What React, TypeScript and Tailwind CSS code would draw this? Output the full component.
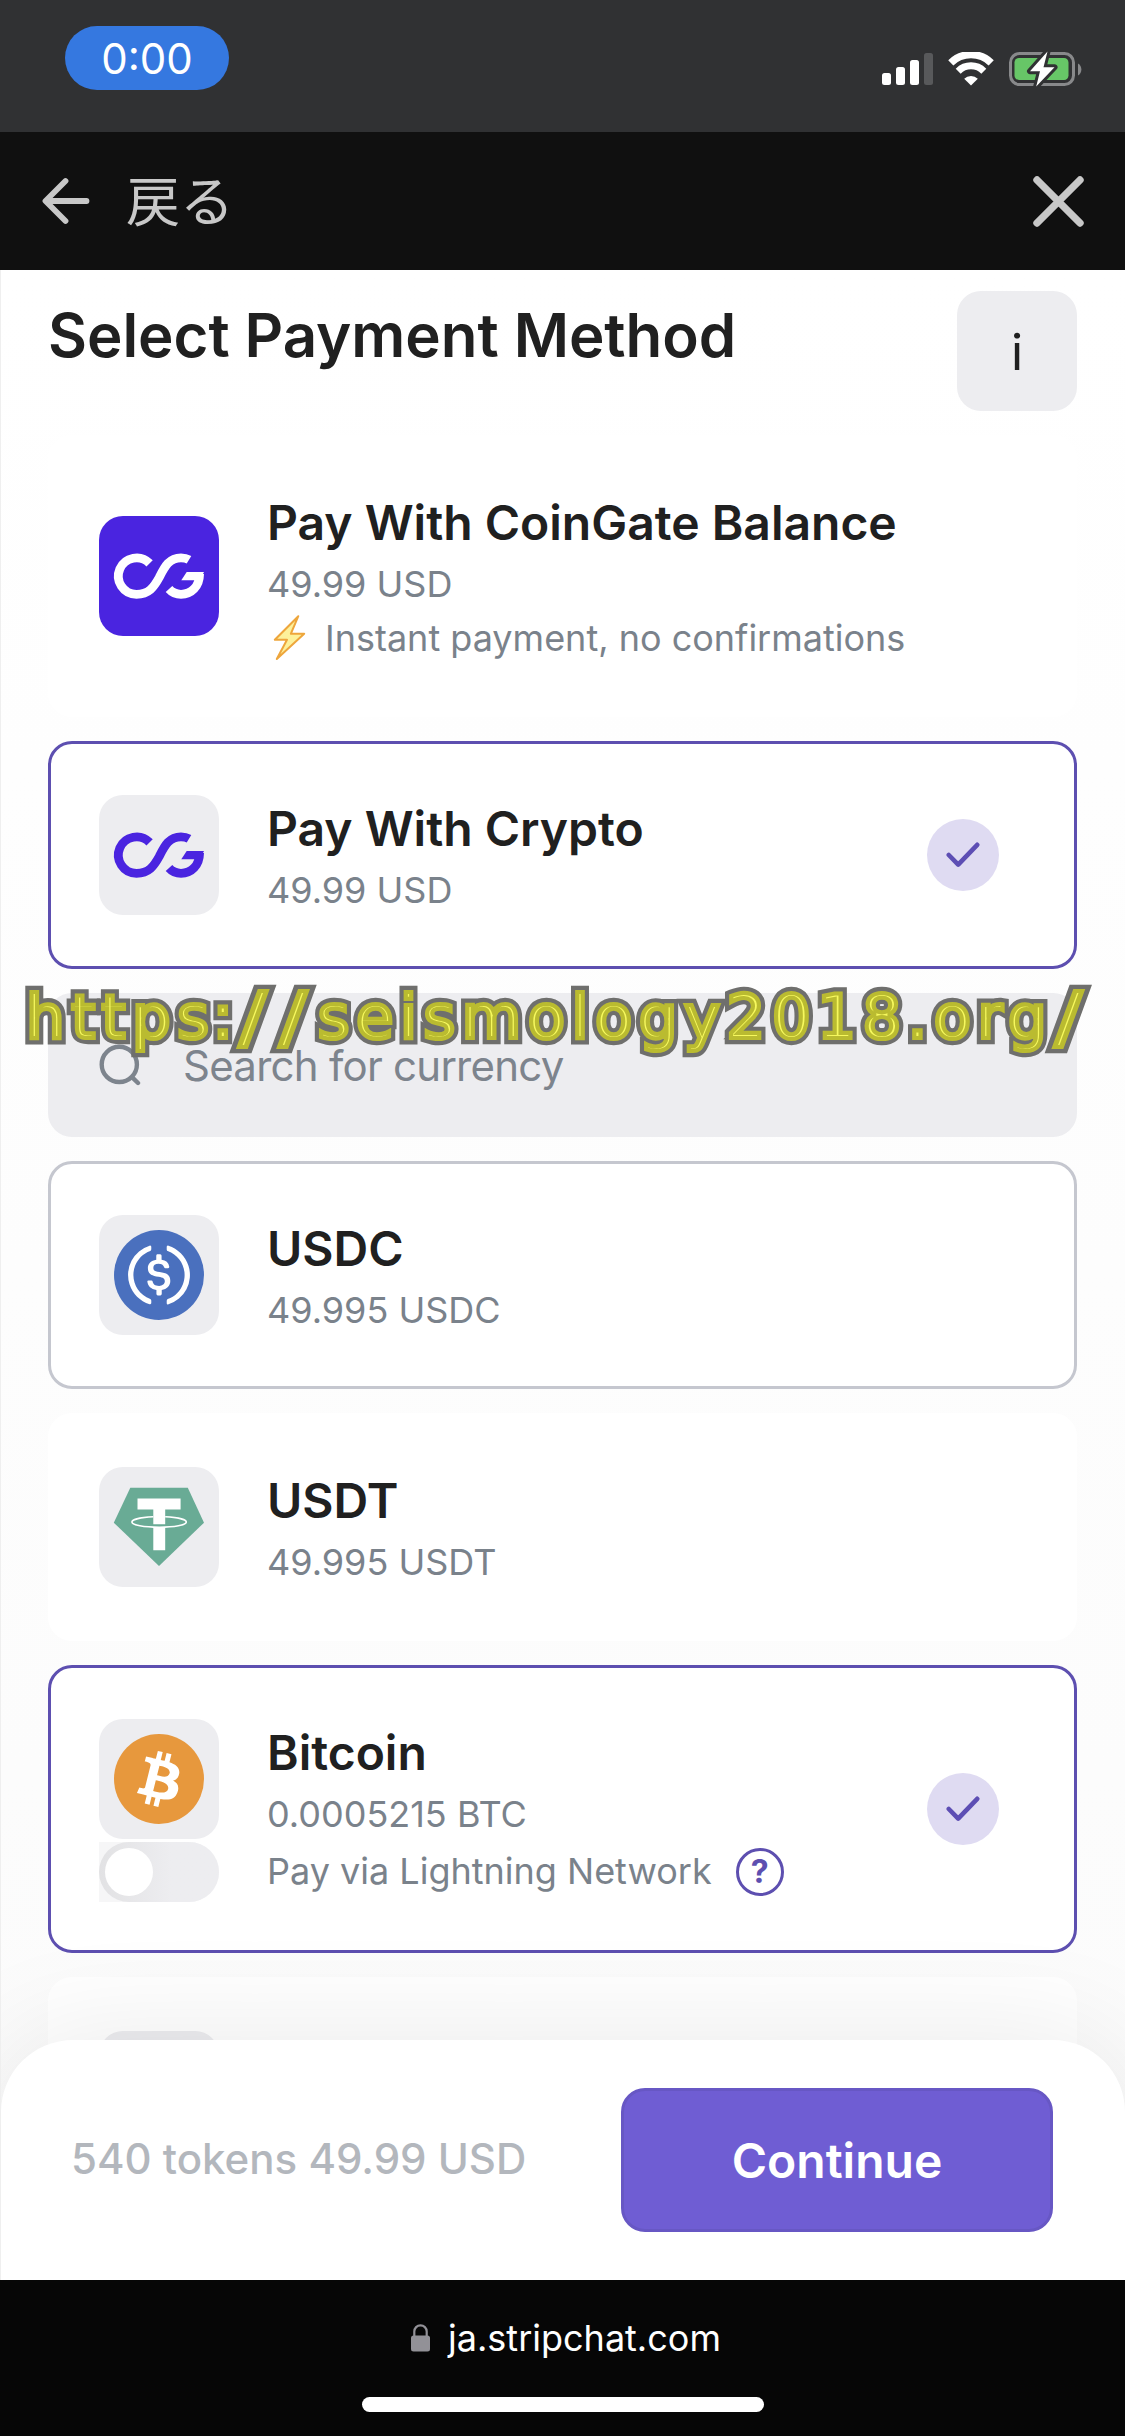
import React from 'react';
import clsx from 'clsx';

const SignalIcon = () => (
  <svg className="w-[51px] h-8" viewBox="0 0 51 32" fill="#fff">
    <rect x="0" y="20" width="9" height="12" rx="2.5" />
    <rect x="14" y="14" width="9" height="18" rx="2.5" />
    <rect x="28" y="7" width="9" height="25" rx="2.5" />
    <rect x="42" y="0" width="9" height="32" rx="2.5" fill="#58595b" />
  </svg>
);

const WifiIcon = () => (
  <svg className="w-[46px] h-[34px]" viewBox="0 0 46 34" fill="none" stroke="#fff">
    <path d="M2.8 10.8A29 29 0 0 1 43.2 10.8" strokeWidth="7.4" />
    <path d="M10.2 19.2A18 18 0 0 1 35.8 19.2" strokeWidth="7" />
    <path d="M23 33.6L16.2 26.8A9.4 9.4 0 0 1 29.8 26.8Z" fill="#fff" stroke="none" />
  </svg>
);

const BatteryIcon = () => (
  <svg className="w-[73px] h-[38px]" viewBox="0 0 73 38" fill="none">
    <rect x="1.5" y="3.5" width="63" height="31" rx="9" stroke="#88898b" strokeWidth="3" />
    <path d="M69 13.5a7 7 0 0 1 0 12z" fill="#88898b" />
    <rect x="5.5" y="8" width="54" height="22" rx="4.5" fill="#67c667" />
    <path
      d="M38.5 1.5L21 21.2H31L27.2 36.5L45.5 17.2H34.5Z"
      fill="#fff"
      stroke="#303133"
      strokeWidth="6"
      strokeLinejoin="round"
      paintOrder="stroke"
    />
  </svg>
);

const BackArrow = () => (
  <svg className="w-[48px] h-[50px]" viewBox="0 0 48 50" fill="none" stroke="#c8c8c8" strokeWidth="5.8" strokeLinecap="round" strokeLinejoin="round">
    <path d="M23.5 5L3.5 25L23.5 45M4 25H44.5" />
  </svg>
);

const CloseIcon = () => (
  <svg className="w-[51px] h-[51px]" viewBox="0 0 51 51" fill="none" stroke="#c8c8c8" strokeWidth="7.4" strokeLinecap="round">
    <path d="M4 4L47 47M47 4L4 47" />
  </svg>
);

const CoinGateLogo = ({ color }: { color: string }) => (
  <svg className="w-[120px] h-[120px]" viewBox="0 0 120 120" fill="none" stroke={color} strokeWidth="8.8">
    <path d="M50.6 47.4A18.2 18.2 0 1 0 37.5 78.3C50 78.3 55 71 60.2 61.5C66 50 70.5 41.8 82 41.8C85 41.8 87.7 42.4 90 43.8" />
    <path d="M70 73C73.2 76.6 77.5 78.3 82 78.3C92.5 78.3 100.4 70.5 100.6 58" />
    <path d="M105 56H87.7L82.3 64.2H101Z" fill={color} stroke="none" />
  </svg>
);

const UsdcLogo = () => (
  <svg className="w-[90px] h-[90px]" viewBox="0 0 32 32">
    <circle cx="16" cy="16" r="16" fill="#4a70be" />
    <g fill="#fff">
      <path d="M20.022 18.124c0-2.124-1.28-2.852-3.84-3.156-1.828-.243-2.193-.728-2.193-1.578 0-.85.61-1.396 1.828-1.396 1.097 0 1.707.364 2.011 1.275a.458.458 0 00.427.303h.975a.416.416 0 00.427-.425v-.06a3.04 3.04 0 00-2.743-2.489V9.142c0-.243-.183-.425-.487-.486h-.915c-.243 0-.426.182-.487.486v1.396c-1.829.242-2.986 1.456-2.986 2.974 0 2.002 1.218 2.791 3.778 3.095 1.707.303 2.255.668 2.255 1.639 0 .97-.853 1.638-2.011 1.638-1.585 0-2.133-.667-2.316-1.578-.06-.242-.244-.364-.427-.364h-1.036a.416.416 0 00-.426.425v.06c.243 1.518 1.219 2.61 3.23 2.914v1.457c0 .242.183.425.487.485h.915c.243 0 .426-.182.487-.485V21.34c1.829-.303 3.047-1.578 3.047-3.217z" />
      <path d="M12.892 24.497c-4.754-1.7-7.192-6.98-5.424-11.653.914-2.55 2.925-4.491 5.424-5.402.244-.121.365-.303.365-.607v-.85c0-.242-.121-.424-.365-.485-.061 0-.183 0-.244.06a10.895 10.895 0 00-7.13 13.717c1.096 3.4 3.717 6.01 7.13 7.102.244.121.488 0 .548-.243.061-.06.061-.122.061-.243v-.85c0-.182-.182-.424-.365-.546zm6.46-18.936c-.244-.122-.488 0-.548.242-.061.061-.061.122-.061.243v.85c0 .243.182.485.365.607 4.754 1.7 7.192 6.98 5.424 11.653-.914 2.55-2.925 4.491-5.424 5.402-.244.121-.365.303-.365.607v.85c0 .242.121.424.365.485.061 0 .183 0 .244-.06a10.895 10.895 0 007.13-13.717c-1.096-3.46-3.778-6.07-7.13-7.162z" />
    </g>
  </svg>
);

const TetherLogo = () => (
  <svg className="w-[120px] h-[120px]" viewBox="0 0 120 120">
    <path d="M31.3 20.7H88.8L105 55.7L60 99L14.8 55.7Z" fill="#69ab95" />
    <path d="M38.5 31.5H81.6V42.4H66.2V57.2H54.3V42.4H38.5ZM54.3 60.4H66.2V83.3H54.3Z" fill="#fff" />
    <path
      d="M54.3 49.8C41.8 50.3 32.9 52.4 32.9 55C32.9 58 45 60.2 60.2 60.2C75.4 60.2 87.3 58 87.3 55C87.3 52.4 78.6 50.3 66.2 49.8"
      fill="none"
      stroke="#fff"
      strokeWidth="1.6"
    />
  </svg>
);

const BitcoinLogo = () => (
  <svg className="w-[90px] h-[90px]" viewBox="0 0 32 32">
    <circle cx="16" cy="16" r="16" fill="#e7983d" />
    <path
      fill="#fff"
      d="M23.189 14.02c.314-2.096-1.283-3.223-3.465-3.975l.708-2.84-1.728-.43-.69 2.765c-.454-.114-.92-.22-1.385-.326l.695-2.783L15.596 6l-.708 2.839c-.376-.086-.746-.17-1.104-.26l.002-.009-2.384-.595-.46 1.846s1.283.294 1.256.312c.7.175.826.638.805 1.006l-.806 3.235c.048.012.11.03.18.057l-.183-.045-1.13 4.532c-.086.212-.303.531-.793.41.018.025-1.256-.313-1.256-.313l-.858 1.978 2.25.561c.418.105.828.215 1.231.318l-.715 2.872 1.727.43.708-2.84c.472.127.93.245 1.378.357l-.706 2.828 1.728.43.715-2.866c2.948.558 5.164.333 6.097-2.333.752-2.146-.037-3.385-1.588-4.192 1.13-.26 1.98-1.003 2.207-2.538zm-3.95 5.538c-.533 2.147-4.148.986-5.32.695l.95-3.805c1.172.293 4.929.872 4.37 3.11zm.535-5.569c-.487 1.953-3.495.96-4.47.717l.86-3.45c.975.243 4.118.696 3.61 2.733z"
    />
  </svg>
);

const BoltEmoji = () => (
  <svg className="w-[34px] h-[48px] ml-[5px] mr-[19px]" viewBox="0 0 34 48">
    <path d="M26.3 2.2L2.8 25.8H15L4.8 45L32.2 19.8H18.8Z" fill="#fdf19a" stroke="#eea63c" strokeWidth="2" strokeLinejoin="round" />
  </svg>
);

const SearchIcon = () => (
  <svg className="w-[42px] h-[42px]" viewBox="0 0 42 42" fill="none" stroke="#7d848d" strokeWidth="4.4" strokeLinecap="round">
    <circle cx="20.3" cy="20.4" r="17.6" />
    <path d="M33.5 33.6L39 39" />
  </svg>
);

const LockIcon = () => (
  <svg className="w-[19px] h-[28px]" viewBox="0 0 19 28">
    <rect x="0" y="11.5" width="19" height="16" rx="2.5" fill="#929197" />
    <path d="M3.3 12V7.5a6.2 6.2 0 0 1 12.4 0V12" fill="none" stroke="#929197" strokeWidth="2.2" />
  </svg>
);

const CheckBadge = () => (
  <div className="mr-[27px] flex h-[72px] w-[72px] items-center justify-center rounded-full bg-[#dfdbf2]">
    <svg className="w-[34px] h-[26px]" viewBox="0 0 34 26" fill="none" stroke="#5d4eb4" strokeWidth="4.6" strokeLinecap="round" strokeLinejoin="round">
      <path d="M2.8 13L12.2 22.6L31.2 2.8" />
    </svg>
  </div>
);

interface MethodCardProps {
  title: string;
  amount: string;
  icon: React.ReactNode;
  tone?: 'plain' | 'selected' | 'outlined';
  filledIcon?: boolean;
  note?: React.ReactNode;
  toggle?: boolean;
}

const MethodCard: React.FC<MethodCardProps> = ({ title, amount, icon, tone = 'plain', filledIcon, note, toggle }) => (
  <div
    className={clsx(
      'flex items-center rounded-3xl border-[3px] bg-white p-12',
      tone === 'plain' && 'border-white',
      tone === 'selected' && 'border-[#5d4fb0]',
      tone === 'outlined' && 'border-[#c5c7cf]'
    )}
  >
    <div className="mr-12 flex flex-col">
      <div
        className={clsx(
          'my-[3px] flex h-[120px] w-[120px] items-center justify-center rounded-3xl',
          filledIcon ? 'bg-[#4a24e0]' : 'bg-[#ededf0]'
        )}
      >
        {icon}
      </div>
      {toggle && (
        <div className="flex h-[60px] w-[120px] items-center rounded-r-full bg-[#f6f6f7]">
          <div className="flex h-[60px] w-[120px] items-center rounded-full bg-linear-to-r from-[#e2e2e4] to-[#ededf0] to-60% px-1.5">
            <div className="h-12 w-12 rounded-full bg-white" />
          </div>
        </div>
      )}
    </div>
    <div className="flex-1">
      <div className="h-[71px] text-[48px] leading-[74px] font-semibold text-[#202020]">{title}</div>
      <div className="h-[55px] text-[36px] leading-[54px] text-[#7a828b]">{amount}</div>
      {note}
    </div>
    {tone === 'selected' && <CheckBadge />}
  </div>
);

// every run of text carries its own dark outline underneath the yellow face
const OUTLINE =
  "before:absolute before:left-0 before:top-0 before:-z-10 before:content-[attr(data-text)] before:[-webkit-text-stroke:12.5px_#6f6f6d]";

const Slashes = ({ text }: { text: string }) => (
  <span
    data-text={text}
    className={clsx('relative mx-[5px] inline-block origin-center translate-y-[3px] scale-x-120 text-[67px] leading-none tracking-[11px] isolate', OUTLINE)}
  >
    {text}
  </span>
);

const Watermark = () => (
  <div className="absolute left-[26px] top-[981px] isolate flex h-[72px] items-baseline whitespace-nowrap font-['DejaVu_Sans',sans-serif] text-[61px] leading-[72px] tracking-[6.5px] text-[#f6f85e] [-webkit-text-stroke:4.2px_#babb30]">
    <span data-text="https" className={clsx('relative', OUTLINE)}>https</span>
    <span data-text=":" className={clsx('relative -ml-[3px] mr-px', OUTLINE)}>:</span>
    <Slashes text="//" />
    <span data-text="seismology2018.org" className={clsx('relative', OUTLINE)}>seismology2018.org</span>
    <Slashes text="/" />
  </div>
);

export default function App() {
  return (
    <div className="relative flex h-[2436px] w-[1125px] flex-col overflow-hidden bg-white font-[Inter,'Noto_Sans_CJK_JP',sans-serif]">
      <div className="flex h-[132px] items-start justify-between bg-[#303133] pl-[65px] pr-[43px]">
        <div className="mt-[26px] flex h-16 w-[164px] items-center justify-center rounded-full bg-[#3578e0] text-[42px] text-white">
          0:00
        </div>
        <div className="mt-[50px] flex h-[38px] items-center">
          <SignalIcon />
          <div className="ml-[15px] mr-[15px]">
            <WifiIcon />
          </div>
          <BatteryIcon />
        </div>
      </div>

      <div className="flex h-[138px] items-center bg-[#101010] pl-[42px] pr-[41px]">
        <BackArrow />
        <span className="ml-9 flex-1 pb-1 font-['Noto_Sans_CJK_JP',sans-serif] text-[54px] leading-none text-[#c8c8c8]">戻る</span>
        <CloseIcon />
      </div>

      <div className="relative h-[2010px] overflow-hidden border-l border-[#efefef] bg-linear-to-b from-white to-[#fbfbfb]">
        <div className="flex items-start justify-between pl-[47px] pr-12 pt-[21px]">
          <h1 className="text-[60px] leading-[88px] font-semibold tracking-[-0.05px] text-[#202020]">Select Payment Method</h1>
          <button className="h-[120px] w-[120px] rounded-3xl bg-[#ededf0] pt-0.5 text-[50px] text-[#202020]">i</button>
        </div>

        <div className="mt-6 flex flex-col gap-6 pl-[47px] pr-12">
          <MethodCard
            title="Pay With CoinGate Balance"
            amount="49.99 USD"
            filledIcon
            icon={<CoinGateLogo color="#fff" />}
            note={
              <div className="flex h-[54px] items-center pb-[3px] text-[36px] text-[#7a828b]">
                <BoltEmoji />
                Instant payment, no confirmations
              </div>
            }
          />
          <MethodCard title="Pay With Crypto" amount="49.99 USD" tone="selected" icon={<CoinGateLogo color="#4a24e0" />} />
          <div className="flex h-36 items-center rounded-3xl bg-[#ededf0] pl-[51px] text-[42px] text-[#7d848d]">
            <SearchIcon />
            <span className="ml-[42px] tracking-[-0.75px]">Search for currency</span>
          </div>
          <MethodCard title="USDC" amount="49.995 USDC" tone="outlined" icon={<UsdcLogo />} />
          <MethodCard title="USDT" amount="49.995 USDT" icon={<TetherLogo />} />
          <MethodCard
            title="Bitcoin"
            amount="0.0005215 BTC"
            tone="selected"
            icon={<BitcoinLogo />}
            toggle
            note={
              <div className="flex h-[60px] items-center text-[36px] text-[#7a828b]">
                <span className="pb-0.5">Pay via Lightning Network</span>
                <span className="ml-[24px] flex h-12 w-12 items-center justify-center rounded-full border-[3px] border-[#5d4fb0] text-[32px] font-bold leading-none text-[#5d4fb0]">
                  ?
                </span>
              </div>
            }
          />
          <MethodCard title="" amount="" icon={null} />
        </div>

        {/* checkout bar pinned over the list */}
        <div className="absolute inset-x-0 bottom-0 flex h-60 items-center justify-between rounded-t-[72px] bg-white pl-[70px] pr-[72px] shadow-[0_0_120px_rgba(0,0,0,0.09)]">
          <span className="pb-[3px] text-[42px] font-medium text-[#b3b7bd]">540 tokens 49.99 USD</span>
          <button className="h-36 w-[432px] rounded-3xl border-[3px] border-[#6757c4] bg-[#6f5dd3] pt-0.5 text-[48px] font-semibold text-white">
            Continue
          </button>
        </div>
      </div>

      <div className="flex h-[156px] flex-col items-center bg-[#060606]">
        <div className="mt-[34px] flex h-[48px] items-center pl-[7px] text-[36px] text-white">
          <LockIcon />
          <span className="ml-[18px]">ja.stripchat.com</span>
        </div>
        <div className="mt-[35px] h-[15px] w-[402px] rounded-full bg-white" />
      </div>

      <Watermark />
    </div>
  );
}
